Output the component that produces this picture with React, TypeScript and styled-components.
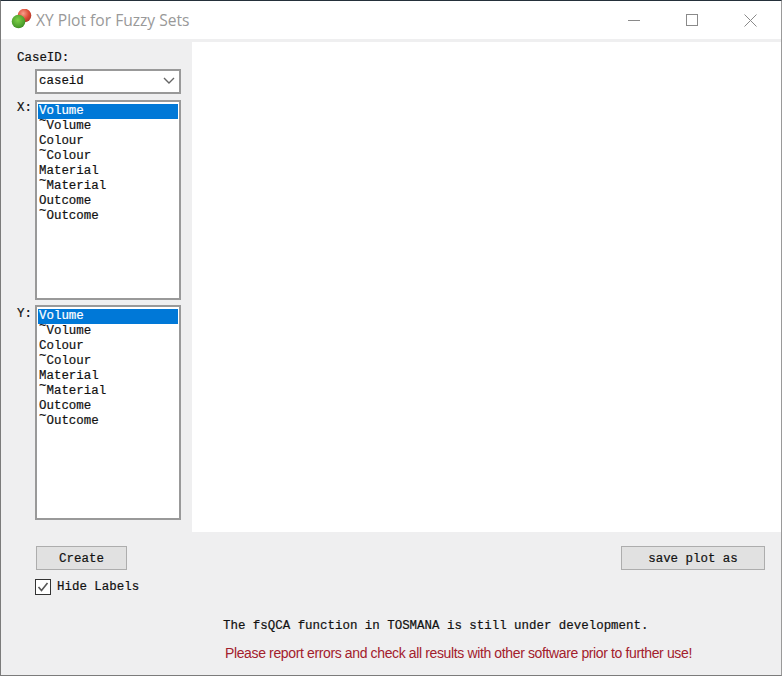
import styled, { createGlobalStyle } from "styled-components"

const options = ["Volume", "~Volume", "Colour", "~Colour", "Material", "~Material", "Outcome", "~Outcome"]

const GlobalStyle = createGlobalStyle`
    html, body {
        margin: 0;
        padding: 0;
        background: #f0f0f0;
    }
`

const Window = styled.div`
    width: 782px;
    height: 676px;
    box-sizing: border-box;
    display: flex;
    flex-direction: column;
    background: #efeff0;
    border-top: 1px solid #24303a;
    border-left: 1px solid #7b7b7b;
    border-right: 1px solid #9a9a9a;
    border-bottom: 1px solid #7b7b7b;
    font-family: "Liberation Mono", monospace;
    font-size: 12.45px;
    color: #111;
    -webkit-text-stroke: 0.2px #111;
    overflow: hidden;
`

const TitleBar = styled.div`
    height: 38px;
    flex: none;
    display: flex;
    align-items: center;
    background: #fff;
    padding-left: 10px;
    -webkit-text-stroke: 0;
`

const Title = styled.span`
    margin-left: 3px;
    font-family: "Open Sans", sans-serif;
    font-size: 15.6px;
    color: #999;
`

const Controls = styled.div`
    margin-left: auto;
    display: flex;
    align-items: center;
    gap: 45px;
    padding-right: 24px;
    color: #8a8a8a;
`

const Main = styled.div`
    display: flex;
    margin-top: 3px;
    height: 490px;
    flex: none;
`

const Sidebar = styled.div`
    width: 191px;
    flex: none;
    box-sizing: border-box;
    padding: 8px 11px 0 16px;
    display: grid;
    grid-template-columns: 18px 146px;
    grid-template-rows: 19px 25px 206px 220px;
`

const CaseLabel = styled.label`
    grid-column: 1 / 3;
    line-height: 17px;
`

const Label = styled.label`
    padding-top: 7px;
    line-height: 14px;
`

const SelectBox = styled.div`
    grid-column: 2;
    box-sizing: border-box;
    height: 25px;
    border: 2px solid #999;
    background: #fff;
    display: flex;
    align-items: center;
    justify-content: space-between;
    padding: 0 4px 2px 2px;
`

const ListBox = styled.div<{ $top: number; $height: number }>`
    box-sizing: border-box;
    margin-top: ${(p) => p.$top}px;
    height: ${(p) => p.$height}px;
    border: 2px solid #999;
    background: #fff;
    padding: 2px 1px;
`

const Item = styled.div<{ $selected?: boolean }>`
    height: 15px;
    line-height: 15px;
    padding-left: 1px;
    white-space: pre;
    background: ${(p) => (p.$selected ? "#0078d7" : "transparent")};
    color: ${(p) => (p.$selected ? "#fff" : "#111")};
    -webkit-text-stroke-color: ${(p) => (p.$selected ? "#fff" : "#111")};
`

const Tilde = styled.span`
    vertical-align: 5px;
    line-height: 0;
`

const Canvas = styled.div`
    flex: 1;
    background: #fff;
`

const Footer = styled.div`
    flex: 1;
    display: flex;
    flex-direction: column;
    padding: 14px 16px 0 35px;
`

const ButtonRow = styled.div`
    display: flex;
    justify-content: space-between;
`

const Button = styled.button<{ $width: number }>`
    width: ${(p) => p.$width}px;
    height: 24px;
    padding: 1px 0 0;
    border: 1px solid #adadad;
    background: #e1e1e1;
    font: inherit;
    color: #111;
`

const CheckRow = styled.div`
    display: flex;
    align-items: center;
    gap: 6px;
    margin-top: 9px;
    margin-left: -1px;
`

const CheckBox = styled.span`
    width: 16px;
    height: 16px;
    box-sizing: border-box;
    border: 1px solid #333;
    background: #fff;
    display: flex;
    align-items: center;
    justify-content: center;
`

const Notes = styled.div`
    margin-left: 187px;
    margin-top: 24px;
`

const Note = styled.div`
    line-height: 15px;
`

const Warning = styled.div`
    margin-top: 11px;
    margin-left: 2px;
    font-family: "Liberation Sans", sans-serif;
    font-size: 14px;
    line-height: 16px;
    letter-spacing: -0.37px;
    color: #a3202c;
    -webkit-text-stroke: 0;
    white-space: nowrap;
`

function AppIcon() {
    return (
        <svg width="22" height="22" viewBox="0 0 22 22">
            <defs>
                <radialGradient id="red" cx="0.4" cy="0.35" r="0.7">
                    <stop offset="0" stopColor="#f7a08c" />
                    <stop offset="0.6" stopColor="#dd4a35" />
                    <stop offset="1" stopColor="#a9382a" />
                </radialGradient>
                <radialGradient id="green" cx="0.45" cy="0.4" r="0.7">
                    <stop offset="0" stopColor="#7fd048" />
                    <stop offset="0.7" stopColor="#4c9f2c" />
                    <stop offset="1" stopColor="#357a20" />
                </radialGradient>
            </defs>
            <circle cx="13.5" cy="6.5" r="6.8" fill="url(#red)" />
            <circle cx="7.5" cy="12.5" r="6.8" fill="url(#green)" />
        </svg>
    )
}

function List({ top, height }: { top: number; height: number }) {
    return (
        <ListBox $top={top} $height={height}>
            {options.map((o, i) => (
                <Item key={o} $selected={i === 0}>
                    {o.startsWith("~") ? <><Tilde>~</Tilde>{o.slice(1)}</> : o}
                </Item>
            ))}
        </ListBox>
    )
}

export default function App() {
    return (
        <Window>
            <GlobalStyle />
            <TitleBar>
                <AppIcon />
                <Title>XY Plot for Fuzzy Sets</Title>
                <Controls>
                    <svg width="13" height="13" viewBox="0 0 13 13">
                        <path d="M0 6.5H12" stroke="currentColor" />
                    </svg>
                    <svg width="13" height="13" viewBox="0 0 13 13">
                        <rect x="0.5" y="0.5" width="11" height="11" fill="none" stroke="currentColor" />
                    </svg>
                    <svg width="13" height="13" viewBox="0 0 13 13">
                        <path d="M0.5 0.5L12.5 12.5M12.5 0.5L0.5 12.5" stroke="currentColor" />
                    </svg>
                </Controls>
            </TitleBar>
            <Main>
                <Sidebar>
                    <CaseLabel>CaseID:</CaseLabel>
                    <span />
                    <SelectBox>
                        caseid
                        <svg width="12" height="7" viewBox="0 0 12 7">
                            <path d="M1 1L6 6L11 1" fill="none" stroke="#666" strokeWidth="1.4" />
                        </svg>
                    </SelectBox>
                    <Label>X:</Label>
                    <List top={6} height={200} />
                    <Label>Y:</Label>
                    <List top={5} height={215} />
                </Sidebar>
                <Canvas />
            </Main>
            <Footer>
                <ButtonRow>
                    <Button $width={91}>Create</Button>
                    <Button $width={144}>save plot as</Button>
                </ButtonRow>
                <CheckRow>
                    <CheckBox>
                        <svg width="12" height="12" viewBox="0 0 12 12">
                            <path d="M1.5 6L4.5 9.5L10.5 2" fill="none" stroke="#555" strokeWidth="1.6" />
                        </svg>
                    </CheckBox>
                    Hide Labels
                </CheckRow>
                <Notes>
                    <Note>The fsQCA function in TOSMANA is still under development.</Note>
                    <Warning>Please report errors and check all results with other software prior to further use!</Warning>
                </Notes>
            </Footer>
        </Window>
    )
}
